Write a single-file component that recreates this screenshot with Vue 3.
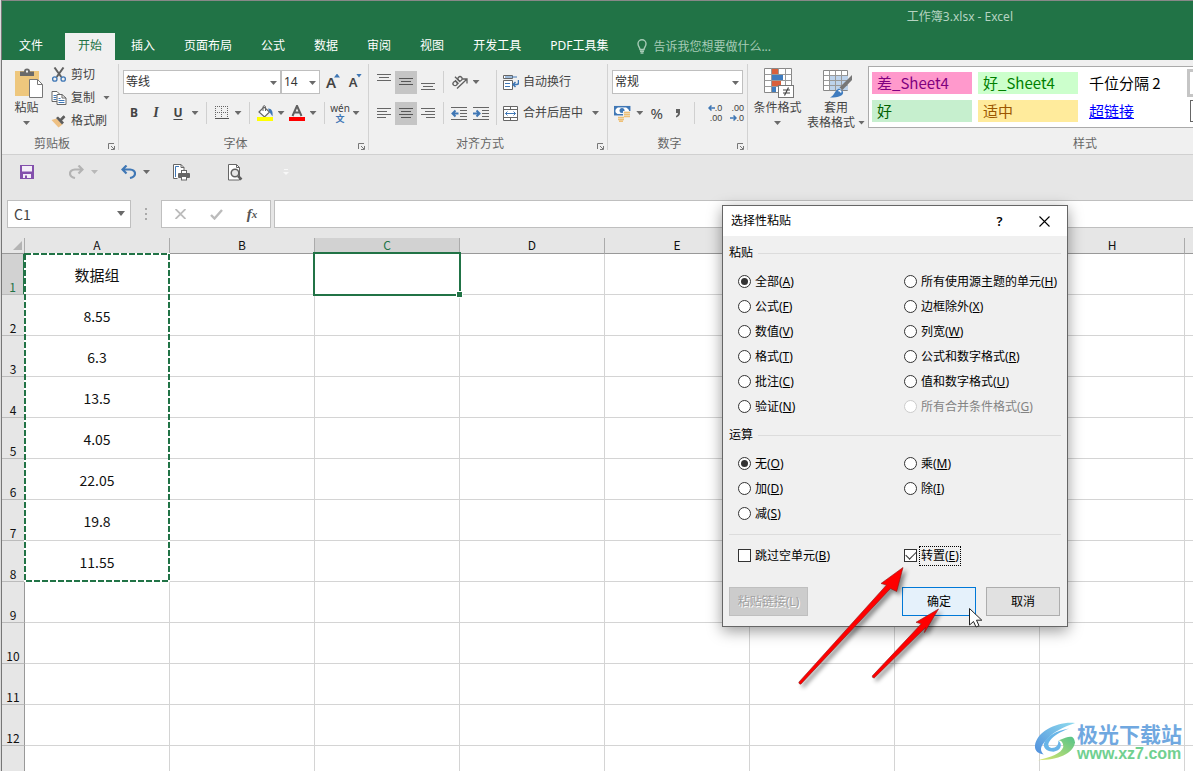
<script setup>
import { ref } from 'vue'

const tabs = ['开始', '插入', '页面布局', '公式', '数据', '审阅', '视图', '开发工具', 'PDF工具集']
const columns = ['A', 'B', 'C', 'D', 'E', 'F', 'G', 'H', 'I']
const dataA = ['数据组', '8.55', '6.3', '13.5', '4.05', '22.05', '19.8', '11.55']
const rows = Array.from({ length: 13 }, (_, i) => i + 1)

const pasteOptions = [
  { id: 'all', text: '全部', key: 'A' },
  { id: 'theme', text: '所有使用源主题的单元', key: 'H' },
  { id: 'formula', text: '公式', key: 'F' },
  { id: 'noborder', text: '边框除外', key: 'X' },
  { id: 'value', text: '数值', key: 'V' },
  { id: 'width', text: '列宽', key: 'W' },
  { id: 'format', text: '格式', key: 'T' },
  { id: 'fnum', text: '公式和数字格式', key: 'R' },
  { id: 'comment', text: '批注', key: 'C' },
  { id: 'vnum', text: '值和数字格式', key: 'U' },
  { id: 'valid', text: '验证', key: 'N' },
  { id: 'merge', text: '所有合并条件格式', key: 'G', disabled: true }
]
const operations = [
  { id: 'none', text: '无', key: 'O' },
  { id: 'mul', text: '乘', key: 'M' },
  { id: 'add', text: '加', key: 'D' },
  { id: 'div', text: '除', key: 'I' },
  { id: 'sub', text: '减', key: 'S' }
]
const paste = ref('all')
const operation = ref('none')
const skipBlanks = ref(false)
const transpose = ref(true)
</script>

<template>
  <div class="window">
    <header class="top">
      <div class="title">工作簿3.xlsx - Excel</div>
      <nav class="tabs">
        <button class="tab file">文件</button>
        <button v-for="t in tabs" :key="t" class="tab" :class="{ active: t === '开始' }">{{ t }}</button>
        <button class="tell">
          <svg width="10" height="15" viewBox="0 0 10 15" fill="none" stroke="#a6cbb6" stroke-width="1.4"><path d="M3 10.5C3 8.5 1 7.500 1 4.700a4 4 0 0 1 8 0C9 7.500 7 8.500 7 10.500zM3 12.200h4M3.500 14h3" /></svg>
          <span>告诉我您想要做什么...</span>
        </button>
      </nav>
    </header>

    <section class="ribbon">
      <div class="group clipboard">
        <div class="body">
          <button class="big paste">
            <svg width="29" height="31" viewBox="0 0 29 31">
              <rect x="0" y="3" width="24" height="25" fill="#eec77d" />
              <path d="M5 3.500h4a3 3 0 0 1 6 0h4V8H5z" fill="#6a6a6a" /><rect x="11" y="2.500" width="2" height="2" fill="#f0f0f0" />
              <path d="M14.500 11.500h8l5 5v13h-13z" fill="#fff" stroke="#777" /><path d="M22.500 11.500v5h5" fill="none" stroke="#777" />
            </svg>
            <span>粘贴</span><i class="caret"></i>
          </button>
          <div class="stack">
            <button class="tool">
              <svg width="14" height="15" viewBox="0 0 14 15" fill="none"><path d="M2.500.500l6.800 9.500M11.500.500L4.700 10" stroke="#606060" stroke-width="2" /><circle cx="2.800" cy="12" r="2.200" stroke="#3f77b5" stroke-width="1.300" /><circle cx="11.200" cy="12" r="2.200" stroke="#3f77b5" stroke-width="1.300" /></svg>
              <span>剪切</span>
            </button>
            <button class="tool">
              <svg width="15" height="14" viewBox="0 0 15 14"><path d="M.5.500h5l3 3v7h-8z" fill="#fff" stroke="#666" /><path d="M2 4.500h3M2 6.500h3M2 8.500h3" stroke="#3f77b5" /><path d="M5.500 3.500h5l4 3.500v6.500h-9z" fill="#fff" stroke="#666" /><path d="M10.500 3.500v3.500h4" fill="none" stroke="#666" /><path d="M7 7.500h2M7 9.500h6M7 11.500h6" stroke="#3f77b5" /></svg>
              <span>复制</span><i class="caret"></i>
            </button>
            <button class="tool">
              <svg width="15" height="14" viewBox="0 0 15 14"><path d="M0 6l5-1.500 6 6L7 13.500z" fill="#eec083" /><path d="M4.500 4l2-1.500 6 6-2 2z" fill="#5c5c5c" /><path d="M8.500 5.500L12 1.800l1.500 1.400L10 6.800z" fill="#5c5c5c" stroke="#5c5c5c" /></svg>
              <span>格式刷</span>
            </button>
          </div>
        </div>
        <div class="label">剪贴板</div>
        <button class="launcher" aria-label="剪贴板设置"><svg width="7" height="7" viewBox="0 0 7 7"><path d="M.5 6V.500H6M3 3l3 3M6.500 3v3.500H3" fill="none" stroke="#777" /></svg></button>
      </div>

      <div class="group font">
        <div class="body lines">
          <div class="line">
            <div class="combo face"><select aria-label="字体"><option>等线</option></select><i class="caret"></i></div>
            <div class="combo size"><select aria-label="字号"><option>14</option></select><i class="caret"></i></div>
            <button class="ic grow" aria-label="增大字号"><span>A</span><i class="up"></i></button>
            <button class="ic grow small" aria-label="减小字号"><span>A</span><i class="down"></i></button>
          </div>
          <div class="line">
            <button class="ic bold">B</button><button class="ic italic">I</button><button class="ic under">U</button>
            <button class="drop" aria-label="下划线样式"><i class="caret"></i></button>
            <i class="sep"></i>
            <button class="ic" aria-label="边框"><svg width="14" height="14" viewBox="0 0 14 14"><path d="M0 .5h13M0 6.500h13M.5 0v12M6.500 0v12M12.500 0v12" stroke="#666" stroke-dasharray="1 1" /><path d="M0 12.500h14" stroke="#555" /></svg></button>
            <button class="drop" aria-label="边框样式"><i class="caret"></i></button>
            <i class="sep"></i>
            <button class="ic" aria-label="填充颜色"><svg width="16" height="16" viewBox="0 0 16 16"><path d="M2 7l5-5 5.500 5L7.500 12z" fill="#fff" stroke="#666" stroke-width="1.200" /><path d="M6 6V1.500q1.500-2 2.500 0V6" fill="none" stroke="#666" /><path d="M11 3.500c4 0 5 3 4.500 8L12.500 7z" fill="#3f77b5" /><rect y="12" width="16" height="4" fill="#ff0" /></svg></button>
            <button class="drop" aria-label="填充样式"><i class="caret"></i></button>
            <button class="ic" aria-label="字体颜色"><svg width="16" height="16" viewBox="0 0 16 16"><path d="M3.500 11L8 .800 12.500 11M5.200 7.500h5.600" fill="none" stroke="#606060" stroke-width="2" /><rect y="12" width="16" height="4" fill="red" /></svg></button>
            <button class="drop" aria-label="颜色样式"><i class="caret"></i></button>
            <i class="sep"></i>
            <button class="ic pinyin"><span>wén</span><b>文</b></button>
            <button class="drop" aria-label="拼音设置"><i class="caret"></i></button>
          </div>
        </div>
        <div class="label">字体</div>
        <button class="launcher" aria-label="字体设置"><svg width="7" height="7" viewBox="0 0 7 7"><path d="M.5 6V.500H6M3 3l3 3M6.500 3v3.500H3" fill="none" stroke="#777" /></svg></button>
      </div>

      <div class="group align">
        <div class="body">
          <div class="lines">
            <div class="line">
              <button class="al" aria-label="顶端对齐"><svg width="14" height="18" viewBox="0 0 14 18"><path d="M0 1.500h14M2 4.500h10M0 7.500h14" stroke="#666" /></svg></button>
              <button class="al on" aria-label="垂直居中"><svg width="14" height="18" viewBox="0 0 14 18"><path d="M0 5.500h14M2 8.500h10M0 11.500h14" stroke="#555" /></svg></button>
              <button class="al" aria-label="底端对齐"><svg width="14" height="18" viewBox="0 0 14 18"><path d="M0 10.500h14M2 13.500h10M0 16.500h14" stroke="#666" /></svg></button>
              <i class="sep"></i>
              <button class="ic" aria-label="方向"><svg width="17" height="16" viewBox="0 0 17 16" fill="none" stroke="#606060" stroke-width="1.300"><g transform="rotate(-45 6 7)"><circle cx="2.800" cy="7.500" r="2.100" /><path d="M5.200 5v5M7.600 2.500V10" /><circle cx="9.800" cy="7.500" r="2.100" /></g><path d="M6 14.500L15.500 5.500M11.500 5h4.500v4.500" /></svg></button>
              <button class="drop" aria-label="方向选项"><i class="caret"></i></button>
            </div>
            <div class="line">
              <button class="al" aria-label="左对齐"><svg width="14" height="12" viewBox="0 0 14 12"><path d="M0 1.500h14M0 4.500h10M0 7.500h14M0 10.500h9" stroke="#666" /></svg></button>
              <button class="al on" aria-label="居中"><svg width="14" height="12" viewBox="0 0 14 12"><path d="M0 1.500h14M2 4.500h10M0 7.500h14M2 10.500h10" stroke="#555" /></svg></button>
              <button class="al" aria-label="右对齐"><svg width="14" height="12" viewBox="0 0 14 12"><path d="M0 1.500h14M4 4.500h10M0 7.500h14M5 10.500h9" stroke="#666" /></svg></button>
              <i class="sep"></i>
              <button class="ic" aria-label="减少缩进量"><svg width="16" height="13" viewBox="0 0 16 13"><path d="M0 .5h16M9 3.500h7M9 6.500h7M9 9.500h7M0 12.500h16" stroke="#666" /><path d="M7.500 6.500H1.500M4.500 3.500l-3 3 3 3" fill="none" stroke="#3f77b5" stroke-width="2" /></svg></button>
              <button class="ic" aria-label="增加缩进量"><svg width="16" height="13" viewBox="0 0 16 13"><path d="M0 .5h16M9 3.500h7M9 6.500h7M9 9.500h7M0 12.500h16" stroke="#666" /><path d="M0 6.500h6M3.500 3.500l3 3-3 3" fill="none" stroke="#3f77b5" stroke-width="2" /></svg></button>
            </div>
          </div>
          <div class="lines wrapcol">
            <div class="line">
              <button class="tool">
                <svg width="16" height="15" viewBox="0 0 16 15" fill="none"><path d="M.5.500h9v3h-9zM.5 5.500h9v9h-9z" stroke="#666" fill="#fff" /><path d="M2 2h12M2 8.500h5M2 11.500h5" stroke="#3f77b5" /><path d="M15.500 5v3q0 1.500-2 1.500H10M12.500 7L10 9.500l2.500 2.500" stroke="#3f77b5" stroke-width="1.500" /></svg>
                <span>自动换行</span>
              </button>
            </div>
            <div class="line">
              <button class="tool">
                <svg width="16" height="15" viewBox="0 0 16 15"><path d="M.5.500h14v14H.500zM.5 3.500h14M.5 11.500h14M7.500.500v3M7.500 11.500v3" fill="#fff" stroke="#666" /><path d="M2.500 7.500h10M4.500 5.500l-2 2 2 2M10.500 5.500l2 2-2 2" fill="none" stroke="#3f77b5" /></svg>
                <span>合并后居中</span><i class="caret far"></i>
              </button>
            </div>
          </div>
        </div>
        <div class="label">对齐方式</div>
        <button class="launcher" aria-label="对齐设置"><svg width="7" height="7" viewBox="0 0 7 7"><path d="M.5 6V.500H6M3 3l3 3M6.500 3v3.500H3" fill="none" stroke="#777" /></svg></button>
      </div>

      <div class="group number">
        <div class="body lines">
          <div class="line"><div class="combo fmt"><select aria-label="数字格式"><option>常规</option></select><i class="caret"></i></div></div>
          <div class="line">
            <button class="ic" aria-label="会计数字格式"><svg width="17" height="17" viewBox="0 0 17 17"><rect x=".7" y="1.700" width="15" height="8" fill="#fff" stroke="#3f77b5" stroke-width="1.500" /><circle cx="8" cy="5.500" r="2.500" fill="#3f77b5" /><path d="M1 2h3L1 5zM15 2h-3l3 3zM1 9.500h3L1 7z" fill="#3f77b5" /><path d="M9 6h8v7H9zM4 12h7v5H4z" fill="#f0f0f0" /><path d="M10 7.500h6M10 9.500h6M10 11.500h6M4 12.500h6M4 14.500h6M5 16.300h4" stroke="#eec077" stroke-width="1.500" /></svg></button>
            <button class="drop" aria-label="货币选项"><i class="caret"></i></button>
            <button class="ic pct">%</button>
            <button class="ic" aria-label="千位分隔样式"><svg width="6" height="9" viewBox="0 0 6 9"><path d="M1 0h4v4Q5 7 1 8.500V7q2-1 2-3H1z" fill="#606060" /></svg></button>
            <i class="sep"></i>
            <button class="ic dec"><span><svg width="7" height="6" viewBox="0 0 7 6"><path d="M7 3H1M3.500.500L1 3l2.500 2.500" fill="none" stroke="#3f77b5" stroke-width="1.500" /></svg>.0</span><span>.00</span></button>
            <button class="ic dec"><span>.00</span><span><svg width="7" height="6" viewBox="0 0 7 6"><path d="M0 3h6M3.500.500L6 3 3.500 5.500" fill="none" stroke="#3f77b5" stroke-width="1.500" /></svg>.0</span></button>
          </div>
        </div>
        <div class="label">数字</div>
        <button class="launcher" aria-label="数字设置"><svg width="7" height="7" viewBox="0 0 7 7"><path d="M.5 6V.500H6M3 3l3 3M6.500 3v3.500H3" fill="none" stroke="#777" /></svg></button>
      </div>

      <div class="group styles">
        <div class="body">
          <button class="big cond">
            <svg width="30" height="31" viewBox="0 0 30 31">
              <path d="M.5.500h27v24H.500z" fill="#fff" stroke="#888" /><path d="M7.500.500v24M14.500.500v24M21.500.500v24M.5 6.500h27M.5 12.500h27M.5 18.500h27" stroke="#999" />
              <path d="M8 1h6v5H8zM8 13h9v5H8z" fill="#d9603b" /><path d="M8 7h11v5H8zM8 19h4v5H8z" fill="#3f7cbf" />
              <rect x="14.500" y="17.500" width="15" height="12" fill="#fff" stroke="#777" /><path d="M19 22h7M19 25h7M24.500 19.500l-4 8" stroke="#444" stroke-width="1.200" />
            </svg>
            <span>条件格式</span><i class="caret"></i>
          </button>
          <button class="big tablefmt">
            <svg width="30" height="31" viewBox="0 0 30 31">
              <path d="M.5 2.500h24v20H.500z" fill="#fff" stroke="#888" /><path d="M7 8h18v14H7z" fill="#bdd3ec" /><path d="M6.500 2.500v20M12.500 2.500v20M18.500 2.500v20M.5 7.500h24M.5 12.500h24M.5 17.500h24" stroke="#999" />
              <path d="M29 7v5L19.500 22l-3-2.500z" fill="#777" /><path d="M16 20.500l4 3c1 4-4 6-13 6 5-2 4-7 9-9z" fill="#3f7cbf" /><path d="M15.500 23q2-1 2.500 1.500" fill="none" stroke="#fff" stroke-width="1.500" />
            </svg>
            <span>套用</span><span class="second">表格格式<i class="caret"></i></span>
          </button>
          <div class="gallery">
            <button class="st bad">差_Sheet4</button><button class="st good4">好_Sheet4</button><button class="st plain">千位分隔 2</button><button class="st normal" aria-label="常规样式"></button>
            <button class="st good">好</button><button class="st mid">适中</button><button class="st link">超链接</button><button class="st check" aria-label="检查单元格"></button>
          </div>
        </div>
        <div class="label">样式</div>
      </div>
    </section>

    <div class="quick">
      <button class="q" aria-label="保存"><svg width="14" height="14" viewBox="0 0 14 14"><path d="M0 0h14v14H0z" fill="#8350ac" /><path d="M2 1h10v5.500H2zM3 9h8v4H3z" fill="#f4eef8" /><path d="M5 10.500h2V13H5z" fill="#8350ac" /></svg></button>
      <button class="q redo" aria-label="恢复"><svg width="15" height="14" viewBox="0 0 15 14"><path d="M13 4.500H6Q1 5 1 8.500T6 13M9.500.500l4 4-4 4" fill="none" stroke="#b3b3b3" stroke-width="2.200" /></svg><i class="caret faint"></i></button>
      <button class="q undo" aria-label="撤消"><svg width="15" height="14" viewBox="0 0 15 14"><path d="M2 4.500h7q5 .500 5 4T9 13M5.500.500l-4 4 4 4" fill="none" stroke="#3f77b5" stroke-width="2.200" /></svg><i class="caret"></i></button>
      <button class="q print" aria-label="快速打印"><svg width="17" height="17" viewBox="0 0 17 17" fill="none"><path d="M4.500 14.500H.500V.500H8l3 3V6.500" stroke="#666" fill="#fff" /><path d="M8 .5v3h3" stroke="#666" /><path d="M2.500 13V2.500H6" stroke="#3f77b5" /><rect x="5" y="9" width="12" height="5" rx="1" fill="#666" /><rect x="8.500" y="6.500" width="5" height="3" fill="#fff" stroke="#666" /><rect x="8.500" y="12.500" width="5" height="3.500" fill="#fff" stroke="#666" /></svg></button>
      <button class="q preview" aria-label="打印预览"><svg width="15" height="17" viewBox="0 0 15 17"><path d="M.5.500h8l3 3v12.500H.500z" fill="#fff" stroke="#666" /><path d="M8.500.500v3h3" fill="none" stroke="#666" /><circle cx="7" cy="9" r="3.800" fill="#e6e6e6" stroke="#606060" stroke-width="1.500" /><path d="M10 12l3.500 3.500" stroke="#606060" stroke-width="2.500" /></svg></button>
      <button class="q custom" aria-label="自定义"><svg width="6" height="7" viewBox="0 0 6 7"><path d="M1 .5h4" stroke="#f8f8f8" /><path d="M0 3h6L3 6z" fill="#f8f8f8" /></svg></button>
    </div>

    <div class="formula">
      <div class="namebox"><input aria-label="名称框" value="C1" /><i class="caret large"></i></div>
      <svg class="dots" width="3" height="12" viewBox="0 0 3 12"><path d="M0 0h2v2H0zM0 5h2v2H0zM0 10h2v2H0z" fill="#aaa" /></svg>
      <div class="fxbox">
        <button aria-label="取消输入"><svg width="11" height="10" viewBox="0 0 11 10"><path d="M.5 0l10 10M10.500 0L.500 10" stroke="#bbb" stroke-width="1.800" /></svg></button>
        <button aria-label="输入"><svg width="13" height="11" viewBox="0 0 13 11"><path d="M1 6l3.500 3.500L12 1" fill="none" stroke="#bbb" stroke-width="2.400" /></svg></button>
        <button class="fx"><i>f</i><sub>x</sub></button>
      </div>
      <input class="entry" aria-label="编辑栏" />
    </div>

    <main class="sheet">
      <table>
        <thead>
          <tr>
            <th class="corner"><svg width="9" height="9" viewBox="0 0 9 9"><path d="M9 0v9H0z" fill="#b4b4b4" /></svg></th>
            <th v-for="c in columns" :key="c" class="col" :class="{ on: c === 'C' }">{{ c }}</th>
          </tr>
        </thead>
        <tbody>
          <tr v-for="r in rows" :key="r">
            <th class="row" :class="{ on: r === 1 }">{{ r }}</th>
            <td v-for="c in columns" :key="c" :class="{ head: r === 1 }">{{ c === 'A' ? dataA[r - 1] : '' }}</td>
          </tr>
        </tbody>
      </table>
      <svg class="ants" width="146" height="329"><rect x="1" y="1" width="144" height="327" fill="none" stroke="#fff" stroke-width="2" /><rect x="1" y="1" width="144" height="327" fill="none" stroke="#217346" stroke-width="2" stroke-dasharray="6 2" /></svg>
      <div class="selected"><i></i></div>
    </main>

    <form class="dialog" role="dialog" aria-label="选择性粘贴" @submit.prevent>
      <div class="caption">
        <span>选择性粘贴</span>
        <button type="button" class="help">?</button>
        <button type="button" class="close" aria-label="关闭"><svg width="11" height="11" viewBox="0 0 11 11"><path d="M.5.500l10 10M10.500.500l-10 10" stroke="#000" stroke-width="1.100" /></svg></button>
      </div>
      <div class="content">
        <div class="legend">粘贴</div>
        <div class="options">
          <label v-for="o in pasteOptions" :key="o.id" :class="{ off: o.disabled }"><input v-model="paste" type="radio" name="paste" :value="o.id" :disabled="o.disabled" /><span>{{ o.text }}(<u>{{ o.key }}</u>)</span></label>
        </div>
        <div class="legend next">运算</div>
        <div class="options">
          <label v-for="o in operations" :key="o.id"><input v-model="operation" type="radio" name="operation" :value="o.id" /><span>{{ o.text }}(<u>{{ o.key }}</u>)</span></label>
        </div>
        <hr />
        <div class="options">
          <label><input v-model="skipBlanks" type="checkbox" /><span>跳过空单元(<u>B</u>)</span></label>
          <label><input v-model="transpose" type="checkbox" /><span class="focus">转置(<u>E</u>)</span></label>
        </div>
        <div class="actions">
          <button type="button" class="pastelink" disabled>粘贴链接(L)</button>
          <button type="submit" class="ok">确定</button>
          <button type="button">取消</button>
        </div>
      </div>
    </form>

    <svg class="arrows" width="200" height="140" viewBox="790 560 200 140">
      <g class="red" fill="red" stroke="#8c1515" stroke-width=".6">
        <path d="M903 567.500L881 583.500l5.500 1.500L798.800 682.200q0 2 2 2L890.500 588.500l6.200 3z" />
        <path d="M938.500 609L916 622.300l5.300 1.500L872.200 676q0 2 2 2L925.500 627.500l-1 5z" />
      </g>
      <path d="M969.500 608.500v16.500l4-3.500 2.500 5.500 3-1.300-2.500-5.500h5.300z" fill="#fff" stroke="#222" />
    </svg>

    <div class="brand">
      <svg width="42" height="40" viewBox="0 0 43 43" preserveAspectRatio="none">
        <defs>
          <linearGradient id="sky" x1="0" y1="1" x2="1" y2="0"><stop offset="0" stop-color="#4f8edc" /><stop offset="1" stop-color="#8edbee" /></linearGradient>
          <linearGradient id="leaf" x1="0" y1="1" x2="1" y2="0"><stop offset="0" stop-color="#dce66c" /><stop offset="1" stop-color="#54c38a" /></linearGradient>
        </defs>
        <path d="M42 1C24-1 3 10 1 25c-.5 6 3 9 9 10C5 30 7 25 13 19 20 10 31 5 42 1z" fill="url(#sky)" />
        <path d="M36 7C23 9 12 16 10 24c0 6 5 8 10 8 7-1 10-7 5-12 0 5-2 8-7 8-8-2-1-14 18-21z" fill="#68b5e8" />
        <path d="M25 20c12-6 16-6 17 2-2 12-17 19-38 19 13-3 24-7 26-14 0-5-2-7-5-7z" fill="url(#leaf)" />
      </svg>
      <div><strong>极光下载站</strong><span>www.xz7.com</span></div>
    </div>
  </div>
</template>

<style>
body { margin: 0; background: #dcdcdc; }
</style>

<style scoped>
* { box-sizing: border-box; }
.window { position: relative; display: flex; flex-direction: column; height: 100vh; margin-left: 1px; overflow: hidden; border-left: 1px solid #777; border-top: 1px solid #888; background: #e6e6e6; color: #444; font: 12px/16px "Noto Sans", "Noto Sans CJK SC", sans-serif; }
button { display: flex; align-items: center; justify-content: center; margin: 0; padding: 0; border: 0; background: none; color: inherit; font: inherit; white-space: nowrap; }
input, select { margin: 0; font: inherit; color: inherit; }
svg { flex: none; display: block; }
.caret { flex: none; width: 7px; height: 4px; background: #6a6a6a; clip-path: polygon(0 0, 100% 0, 50% 100%); }
.caret.large { width: 8px; height: 5px; }
.caret.faint { background: #b8b8b8; }

.top { flex: none; background: #217346; color: #fff; }
.title { height: 32px; padding: 8px 180px 0 0; text-align: right; color: #b5d3c1; }
.tabs { display: flex; gap: 3px; height: 27px; padding-left: 4px; }
.tab { padding: 0 13px 2px; }
.tab.file { margin-right: 6px; }
.tab.active { background: #f0f0f0; color: #217346; }
.tell { gap: 6px; margin-left: 13px; color: #a6cbb6; }

.ribbon { flex: none; display: flex; height: 95px; overflow: hidden; background: #f0f0f0; border-bottom: 1px solid #d0d0d0; }
.group { position: relative; flex: none; display: flex; flex-direction: column; }
.group::after { content: ""; position: absolute; right: 0; top: 4px; bottom: 4px; width: 1px; background: #d2d2d2; }
.body { display: flex; height: 74px; }
.label { height: 20px; text-align: center; line-height: 20px; color: #666; }
.launcher { position: absolute; right: 4px; bottom: 4px; }
.clipboard { width: 117px; }
.font { width: 250px; }
.align { width: 239px; }
.number { width: 140px; }
.styles { width: 674px; }
.clipboard .label, .number .label, .font .label, .align .label { padding-right: 17px; }
.big { flex-direction: column; justify-content: flex-start; padding-top: 8px; }
.big span { margin-top: 1px; }
.big .caret { margin-top: 5px; }
.paste { width: 49px; }
.paste svg { margin-left: 5px; }
.stack { display: flex; flex-direction: column; padding-top: 3px; }
.tool { height: 23px; gap: 4px; justify-content: flex-start; }
.tool svg { width: 16px; }
.tool .caret { margin-left: 4px; }
.lines { display: flex; flex-direction: column; gap: 7px; padding: 10px 4px 0; }
.line { display: flex; align-items: center; height: 24px; }
.combo { position: relative; height: 24px; }
.combo select { appearance: none; width: 100%; height: 100%; padding: 0 2px; border: 1px solid #bfbfbf; border-radius: 0; background: #fff; color: #333; }
.combo .caret { position: absolute; right: 4px; top: 11px; }
.face { width: 158px; }
.size { width: 39px; }
.fmt { width: 131px; }
.ic { width: 22px; height: 23px; }
.drop { width: 12px; height: 23px; }
.sep { width: 1px; height: 22px; margin: 0 4px; background: #d0d0d0; }
.grow { position: relative; font-size: 15px; font-weight: 600; }
.grow.small { font-size: 13px; }
.grow i { position: absolute; right: 2px; top: 3px; width: 6px; height: 4px; background: #3f77b5; }
.grow .up { clip-path: polygon(50% 0, 100% 100%, 0 100%); }
.grow .down { clip-path: polygon(0 0, 100% 0, 50% 100%); }
.bold { font-weight: 700; }
.italic { font: italic 700 14px "Liberation Serif", serif; }
.under { font-weight: 700; text-decoration: underline; text-underline-offset: 2px; }
.font .sep { margin: 0 5px; }
.font .ic:not(.grow, .bold, .italic, .under) { width: 20px; }
.pinyin { flex-direction: column; font: 10px/11px "Noto Sans", "Noto Sans CJK SC", sans-serif; }
.pinyin b { color: #3f77b5; font-size: 9px; line-height: 10px; }
.al { width: 22px; height: 23px; }
.al.on { background: #c5c5c5; }
.align .wrapcol { position: relative; padding-left: 7px; }
.wrapcol::before { content: ""; position: absolute; left: 0; top: 10px; bottom: 9px; width: 1px; background: #d0d0d0; }
.wrapcol .far { margin-left: 5px; }
.pct { font-size: 15px; }
.dec { flex-direction: column; align-items: flex-end; font: 9px/10px "Liberation Sans", sans-serif; }
.dec span { display: flex; align-items: center; height: 10px; }
.number .sep { margin: 0 5px; }
.cond { width: 59px; }
.cond svg { margin-left: 2px; }
.tablefmt { width: 58px; }
.tablefmt svg { margin-left: 3px; }
.tablefmt span { line-height: 15px; }
.tablefmt .second { display: flex; align-items: center; gap: 3px; margin: 0; }
.second .caret { margin: 0; }
.gallery { display: grid; grid-template-columns: repeat(5, 100px); grid-template-rows: 22px 22px; gap: 6px; align-content: start; width: 540px; height: 62px; margin: 6px 0 0 3px; padding: 5px 3px; overflow: hidden; border: 1px solid #aaa; background: #fff; font: 15px/20px "Noto Sans CJK SC", sans-serif; }
.st { justify-content: flex-start; padding-left: 5px; }
.bad { background: #ff99cc; color: #800080; }
.good4 { background: #ccffcc; color: #008000; }
.good { grid-column: 1; background: #c6efce; color: #006100; }
.mid { background: #ffeb9c; color: #9c5700; }
.plain, .link { color: #000; }
.link { color: #00f; text-decoration: underline; }
.normal { height: 28px; margin: -3px 0 0 -3px; border: 3px solid #c5c5c5; }
.check { border: 1px solid #666; }

.quick { flex: none; display: flex; align-items: center; height: 34px; padding-left: 18px; }
.q { gap: 7px; }
.redo { margin-left: 35px; }
.undo { margin-left: 23px; }
.print { margin-left: 23px; }
.preview { margin-left: 38px; }
.custom { margin-left: 40px; }
.formula { flex: none; display: flex; align-items: center; height: 49px; padding: 11px 0 10px 5px; }
.namebox { position: relative; width: 124px; height: 28px; }
.namebox input { width: 100%; height: 100%; padding: 0 6px; border: 1px solid #bfbfbf; background: #fff; font-family: "Noto Sans CJK SC", sans-serif; font-size: 14px; }
.namebox .caret { position: absolute; right: 6px; top: 11px; }
.dots { margin: 0 13px 0 14px; }
.fxbox { display: flex; width: 110px; height: 28px; border: 1px solid #bfbfbf; background: #fff; }
.fxbox button { flex: 1; }
.fx { font: 700 15px/16px "Liberation Serif", serif; color: #555; }
.fx sub { font-size: 11px; font-style: italic; }
.entry { flex: 1; min-width: 0; height: 28px; margin-left: 3px; border: 1px solid #bfbfbf; border-right: 0; background: #fff; }

.sheet { position: relative; flex: 1; min-height: 0; overflow: hidden; background: #fff; color: #111; }
table { table-layout: fixed; width: 1328px; border-spacing: 0; font-family: "Noto Sans CJK SC", sans-serif; }
th, td { padding: 0; font-weight: 400; }
.corner { width: 23px; height: 16px; background: #e6e6e6; border-right: 1px solid #ababab; border-bottom: 1px solid #999; }
.corner svg { margin-left: 11px; }
.col { width: 145px; height: 16px; line-height: 14px; vertical-align: top; background: #e6e6e6; border-right: 1px solid #ababab; border-bottom: 1px solid #999; }
.col.on { background: #d2d2d2; color: #217346; }
.row { height: 41px; vertical-align: bottom; line-height: 14px; background: #e6e6e6; border-right: 1px solid #999; border-bottom: 1px solid #bbb; }
.row.on { background: #d2d2d2; color: #217346; border-right: 2px solid #217346; }
td { height: 41px; padding-top: 2px; text-align: center; font-size: 14px; line-height: 20px; border-right: 1px solid #d4d4d4; border-bottom: 1px solid #d4d4d4; }
td.head { font-size: 15px; }
.ants { position: absolute; left: 22px; top: 15px; }
.selected { position: absolute; left: 311px; top: 14px; width: 148px; height: 44px; border: 2px solid #217346; }
.selected i { position: absolute; right: -4px; bottom: -4px; width: 7px; height: 7px; border: 1px solid #fff; background: #217346; }

.dialog { position: absolute; left: 720px; top: 204px; width: 346px; border: 1px solid #666; background: #f0f0f0; color: #000; box-shadow: 0 4px 14px rgba(0, 0, 0, .4); }
.caption { display: flex; align-items: center; height: 30px; padding-left: 8px; background: #fff; }
.caption span { flex: 1; }
.caption button { width: 45px; height: 30px; }
.help { font-size: 13px; font-weight: 600; }
.content { padding: 7px 6px 10px; }
.legend { display: flex; align-items: center; gap: 5px; height: 20px; margin-bottom: 6px; }
.legend::after { content: ""; flex: 1; height: 1px; background: #dcdcdc; }
.legend.next { margin-top: 6px; }
.options { display: grid; grid-template-columns: 166px 1fr; padding-left: 9px; }
.options label { display: flex; align-items: center; gap: 4px; height: 25px; white-space: nowrap; }
.options u { text-underline-offset: 1px; }
.off { color: #838383; }
.options input { appearance: none; flex: none; display: grid; place-items: center; width: 13px; height: 13px; border: 1px solid #333; background: #fff; }
.options input[type="radio"] { border-radius: 50%; }
.options input[type="radio"]:checked::before { content: ""; width: 7px; height: 7px; border-radius: 50%; background: #333; }
.options input[type="checkbox"]:checked::before { content: ""; width: 9px; height: 5px; margin-bottom: 4px; border: solid #333; border-width: 0 0 1px 1px; rotate: -45deg; }
.options input:disabled { border-color: #ccc; }
.focus { margin-left: -2px; padding: 0 1px; border: 1px dotted #000; line-height: 18px; }
hr { height: 1px; margin: 8px 0; border: 0; background: #dcdcdc; }
.actions { display: flex; gap: 10px; margin: 19px 1px 0 0; }
.actions button { width: 74px; height: 29px; border: 1px solid #adadad; background: #e1e1e1; }
.actions .pastelink { width: 79px; margin-right: auto; border-color: #bfbfbf; background: #ccc; color: #a0a0a0; text-shadow: 1px 1px #fff; }
.actions .ok { border-color: #0078d7; background: #e5f1fb; }
.arrows { position: absolute; left: 788px; top: 559px; pointer-events: none; }
.red { filter: drop-shadow(3px 3px 2px rgba(0, 0, 0, .45)); }
.brand { position: absolute; right: 11px; bottom: 8px; display: flex; align-items: center; gap: 1px; }
.brand div { display: flex; flex-direction: column; }
.brand strong { font: 700 21px/24px "Noto Sans CJK SC", sans-serif; color: #70a8e0; }
.brand span { font: 700 16px/18px "Liberation Sans", sans-serif; color: #70d090; }
</style>
